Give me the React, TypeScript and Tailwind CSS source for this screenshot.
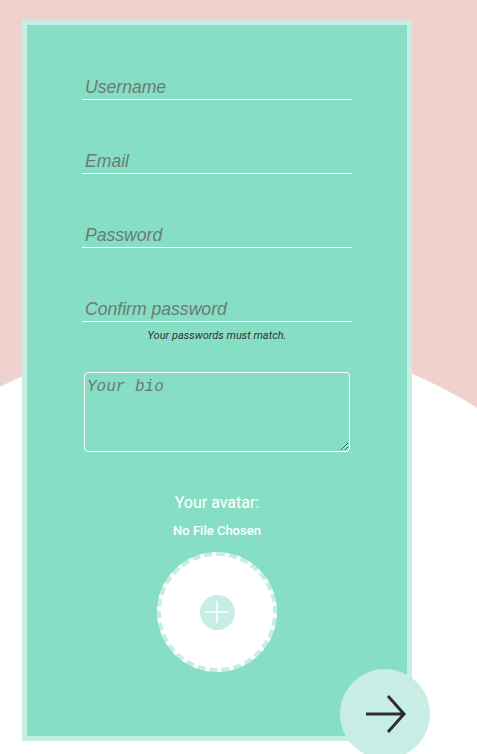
import React from 'react';

const fieldClass =
  "block w-[270px] h-[27px] pt-[3px] pl-[3px] bg-transparent border-b border-white outline-none text-[17.6px] italic font-['Liberation_Sans',Arial,sans-serif] text-[#333] placeholder:text-[#6b7b74]";

export default function App() {
  return (
    <div className="relative h-[754px] w-full overflow-hidden bg-[#efd1cd]">
      {/* big white blob behind the card */}
      <div className="absolute left-[-265px] top-[334px] h-[970px] w-[970px] rounded-full bg-white" />

      <form className="relative ml-[22px] mt-[20px] flex h-[721px] w-[390px] flex-col items-center border-[5px] border-[#c8ede5] bg-[#86dec5] pt-[48px]">
        <div className="flex flex-col gap-[47px]">
          <input className={fieldClass} placeholder="Username" />
          <input className={fieldClass} placeholder="Email" />
          <input className={fieldClass} type="password" placeholder="Password" />
          <div className="flex flex-col items-center">
            <input className={fieldClass} type="password" placeholder="Confirm password" />
            <p className="mt-[6px] text-[11px] italic font-['Roboto',sans-serif] text-[#333] leading-[16px]">
              Your passwords must match.
            </p>
          </div>
        </div>

        <textarea
          className="mt-[28px] h-[80px] w-[266px] rounded-[4px] border border-white bg-transparent p-[2px] text-[16px] italic font-['Liberation_Mono',monospace] text-[#333] placeholder:text-[#6b7b74] outline-none"
          placeholder="Your bio"
        />

        <label className="mt-[41px] flex flex-col items-center font-['Roboto',sans-serif] text-white">
          <span className="text-[16px] leading-[20px]">Your avatar:</span>
          <span className="mt-[10px] text-[13px] font-medium leading-[16px]">No File Chosen</span>
          <div className="mt-[13px] flex h-[120px] w-[120px] items-center justify-center rounded-full border-4 border-dashed border-[#c8ede5] bg-white">
            <div className="flex h-[35px] w-[35px] items-center justify-center rounded-full bg-[#c8ede5]">
              <svg width="24" height="24" viewBox="0 0 24 24" fill="none" stroke="white" strokeWidth="1.5">
                <path d="M12 1v22M1 12h22" />
              </svg>
            </div>
          </div>
        </label>
      </form>

      <button className="absolute left-[340px] top-[669px] flex h-[90px] w-[90px] items-center justify-center rounded-full bg-[#c8ede5]">
        <svg width="44" height="40" viewBox="0 0 44 40" fill="none" stroke="#2e2e2e" strokeWidth="3">
          <path d="M3 20h38M25 2l16 18-16 18" />
        </svg>
      </button>
    </div>
  );
}
